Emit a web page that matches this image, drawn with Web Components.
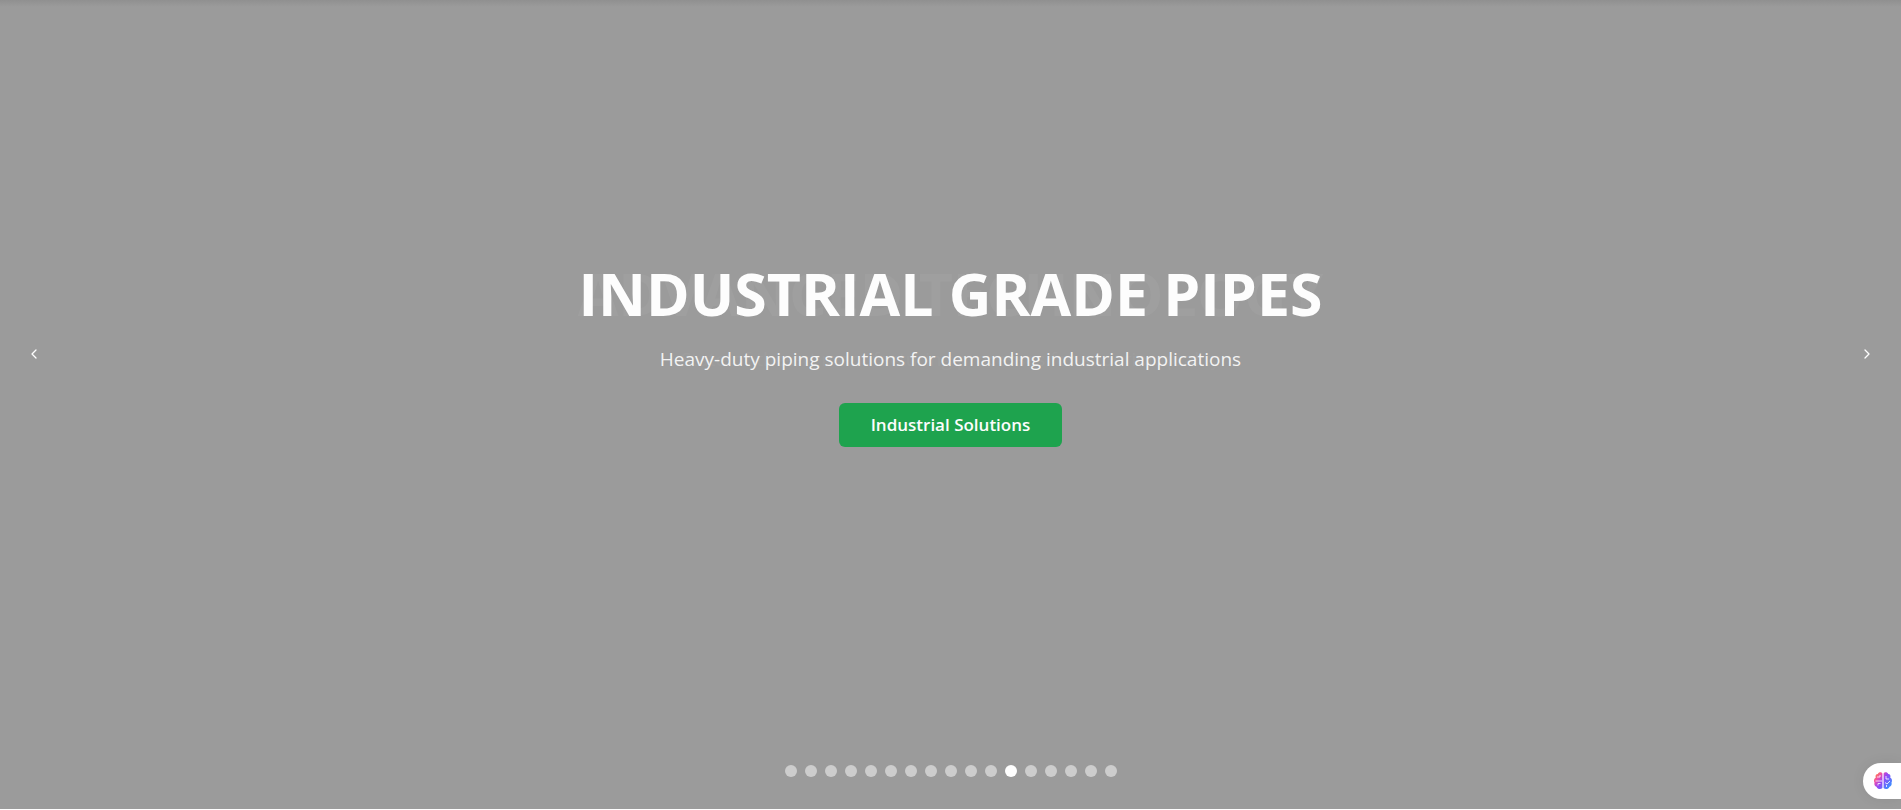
<!DOCTYPE html>
<html lang="en"><head><meta charset="utf-8"><title>Industrial Grade Pipes</title>
<style>
html,body{margin:0;height:100%}
body{font-family:"Open Sans","Noto Sans",sans-serif;background:#fff;overflow:hidden}
</style></head><body>
<hero-carousel>
<hero-slide leaving aria-hidden="true"><span slot="title">ADVANCED TECHNOLOGY</span><span slot="text">State-of-the-art manufacturing processes for superior quality</span></hero-slide>
<hero-slide><span slot="title">INDUSTRIAL GRADE PIPES</span><span slot="text">Heavy-duty piping solutions for demanding industrial applications</span><span slot="action">Industrial Solutions</span></hero-slide>
</hero-carousel>
<assistant-tab></assistant-tab>
<script>
customElements.define('hero-slide',class extends HTMLElement{constructor(){super();
this.attachShadow({mode:'open'}).innerHTML=`<style>
:host{grid-area:1/1;display:flex;flex-direction:column;align-items:center;color:#fff;text-align:center;opacity:.98}
:host([leaving]){opacity:.04}
:host([leaving]) button{visibility:hidden}
h1{font:700 59px/60px "Open Sans",sans-serif;margin:0 0 22px;white-space:nowrap}
p{font:400 19px/28px "Open Sans",sans-serif;margin:0 0 30px;opacity:.9;white-space:nowrap}
button{font:600 17px/28px "Open Sans",sans-serif;color:#fff;background:#1ca44d;border:0;border-radius:6px;padding:8px 32px}
</style><h1><slot name="title"></slot></h1><p><slot name="text"></slot></p><button type="button"><slot name="action">&nbsp;</slot></button>`}});
customElements.define('hero-carousel',class extends HTMLElement{constructor(){super();
const dots=Array.from({length:17},(_,i)=>`<button type="button" class="dot" aria-label="Slide ${i+1}"${i===11?' aria-current="true"':''}></button>`).join('');
this.attachShadow({mode:'open'}).innerHTML=`<style>
:host{display:grid;grid-template:1fr/80px 1fr 80px;align-items:center;height:calc(100vh - 1px);background:linear-gradient(#909090,#9b9b9b 7px);position:relative}
.slides{display:grid;justify-content:center;margin-top:-100px}
.nav{background:none;border:0;padding:0;display:grid;place-items:center;width:20px;height:20px;margin:-102px 24px 0}
.next{justify-self:end}
.nav svg{width:16px;height:16px;fill:none;stroke:#fff;stroke-width:1.3;stroke-linecap:round;stroke-linejoin:round}
.dots{position:absolute;left:0;right:0;bottom:32px;display:flex;justify-content:center;gap:8px}
.dot{width:12px;height:12px;border:0;border-radius:50%;padding:0;background:#cdcdcd}
.dot[aria-current]{background:#fff}
</style><button type="button" class="nav prev" aria-label="Previous slide"><svg viewBox="0 0 16 16"><path d="m10 4-4 4 4 4"/></svg></button>
<div class="slides"><slot></slot></div>
<button type="button" class="nav next" aria-label="Next slide"><svg viewBox="0 0 16 16"><path d="m6 4 4 4-4 4"/></svg></button>
<div class="dots">${dots}</div>`}});
customElements.define('assistant-tab',class extends HTMLElement{constructor(){super();
this.attachShadow({mode:'open'}).innerHTML=`<style>
:host{position:fixed;right:0;bottom:11px}
button{display:flex;align-items:center;width:38px;height:36px;border:0;border-radius:18px 0 0 18px;background:#fff;padding:0 0 0 10px;box-shadow:0 0 14px #0001}
svg{width:20px;height:20px}
</style><button type="button" aria-label="Open assistant"><svg viewBox="0 0 20 20"><defs><linearGradient id="g" gradientUnits="userSpaceOnUse" x1="2" y1="3" x2="17" y2="15"><stop offset="0" stop-color="#ff8a3c"/><stop offset=".25" stop-color="#f04fa8"/><stop offset=".5" stop-color="#9a45f5"/><stop offset="1" stop-color="#3f8cff"/></linearGradient></defs>
<path fill="url(#g)" d="M9.400 2.500C8.500.800 5.500.900 4.800 3 2.800 3 2 5 2.800 6.500.900 7.500.500 10 1.500 11.500c-.7 2 .5 3.800 2 4.200.8 2.500 4.400 3 5.900 1.300zM10.600 2.500c.9-1.700 3.900-1.600 4.600.5 2 0 2.800 2 2 3.500 1.900 1 2.300 3.500 1.300 5 .7 2-.5 3.800-2 4.200-.8 2.500-4.400 3-5.900 1.300z"/>
<path fill="none" stroke="#fff" stroke-width=".8" d="M4 6h3v-2M2.500 10H9M5 14.500v-2h2.500M13 5v3h3M12 11.500l2 1.500 3-3M13.500 16v-2"/></svg></button>`}});
</script></body></html>
